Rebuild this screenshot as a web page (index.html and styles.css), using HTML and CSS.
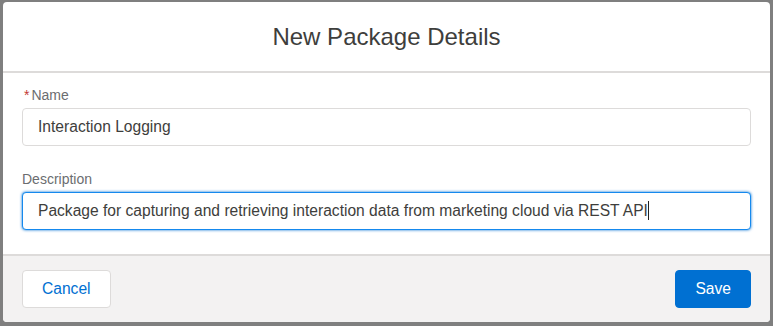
FILE: index.html
```html
<!DOCTYPE html>
<html lang="en">
<head>
    <meta charset="UTF-8">
    <meta name="viewport" content="width=device-width, initial-scale=1.0">
    <title>New Package Details</title>
    <link rel="stylesheet" href="styles.css">
</head>
<body>
    <div class="backdrop">
        <div class="modal">
            <div class="modal-header">
                <h2>New Package Details</h2>
            </div>
            <div class="modal-body">
                <div class="field">
                    <label class="field-label"><abbr class="required">*</abbr>Name</label>
                    <div class="field-input">Interaction Logging</div>
                </div>
                <div class="field">
                    <label class="field-label">Description</label>
                    <div class="field-input focused">Package for capturing and retrieving interaction data from marketing cloud via REST API<span class="caret"></span></div>
                </div>
            </div>
            <div class="modal-footer">
                <button class="btn btn-neutral">Cancel</button>
                <button class="btn btn-brand">Save</button>
            </div>
        </div>
    </div>
</body>
</html>
```

FILE: styles.css
```css
body {
    margin: 0;
    font-family: Arial, 'Liberation Sans', sans-serif;
    background-color: #7f7f7f;
    color: #3e3e3c;
}
.backdrop {
    height: 326px;
    box-sizing: border-box;
    padding: 2px 3px 4px 3px;
}
.modal {
    height: 320px;
    display: flex;
    flex-direction: column;
    background: #fff;
    border-radius: 4px;
    overflow: hidden;
}
.modal-header {
    height: 69px;
    display: flex;
    align-items: center;
    justify-content: center;
    border-bottom: 2px solid #dddbda;
}
.modal-header h2 {
    margin: 0;
    padding-top: 2px;
    font-size: 24px;
    font-weight: normal;
    color: #3e3e3c;
}
.modal-body {
    flex: 1;
    padding: 13px 19px 0 19px;
}
.field {
    margin-bottom: 24px;
}
.field-label {
    display: block;
    font-size: 14px;
    line-height: 18px;
    color: #6b6d70;
    margin-bottom: 4px;
}
.field-label.small {
    margin-bottom: 5px;
}
.required {
    color: #c23934;
    text-decoration: none;
    margin: 0 2px 0 2px;
}
.field-input {
    height: 36px;
    line-height: 36px;
    border: 1px solid #dddbda;
    border-radius: 4px;
    padding: 0 15px;
    font-size: 15.6px;
    color: #3e3e3c;
    background: #fff;
}
.field-input.focused {
    border-color: #1589ee;
    box-shadow: 0 0 3px #0070d2;
}
.caret {
    display: inline-block;
    width: 1px;
    height: 19px;
    background: #222;
    vertical-align: -4px;
}
.modal-footer {
    height: 67px;
    display: flex;
    align-items: center;
    justify-content: space-between;
    padding: 0 19px;
    background-color: #f3f2f2;
    border-top: 2px solid #dddbda;
}
.btn {
    height: 38px;
    padding: 0 19px;
    font-family: Arial, 'Liberation Sans', sans-serif;
    font-size: 15.6px;
    border-radius: 4px;
    cursor: pointer;
}
.btn-neutral {
    background: #fff;
    color: #0070d2;
    border: 1px solid #dddbda;
}
.btn-brand {
    background: #0070d2;
    color: #fff;
    border: 1px solid #0070d2;
}
```
